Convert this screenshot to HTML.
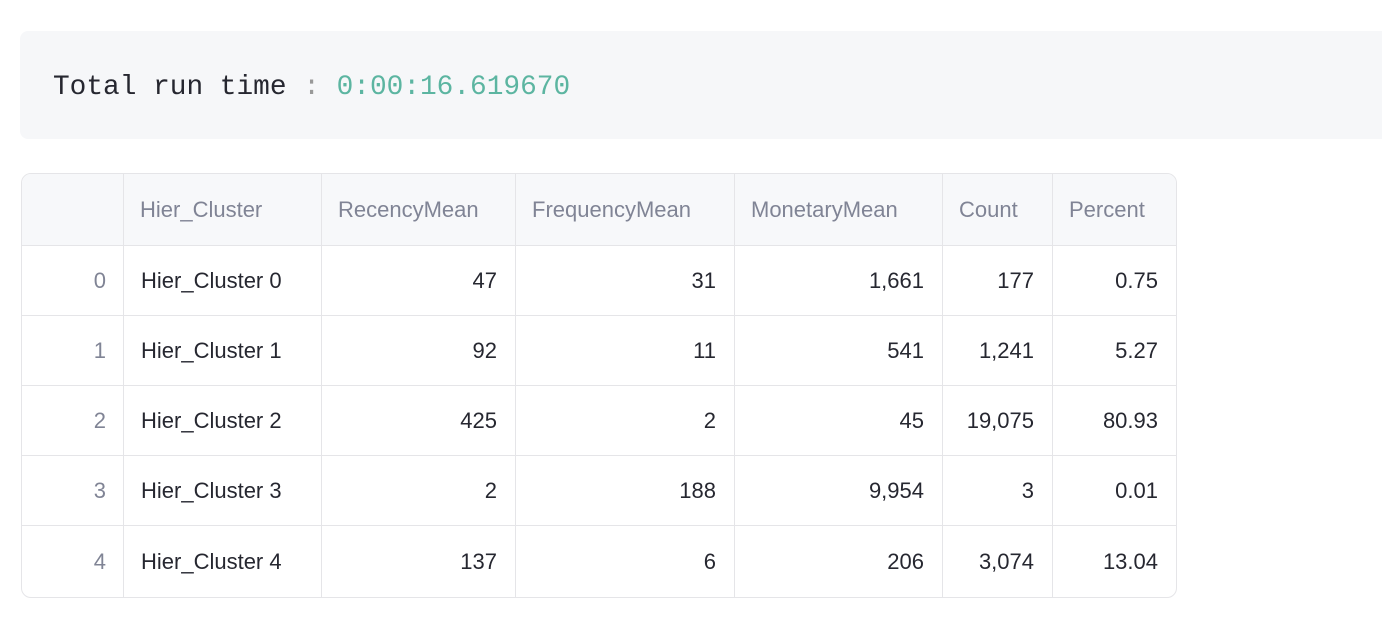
<!DOCTYPE html>
<html><head><style>
body{margin:0;background:#fff;width:1382px;height:622px;overflow:hidden;position:relative;font-family:"Liberation Sans",sans-serif}
.code{position:absolute;left:20px;top:31px;width:1380px;height:108px;background:#f6f7f9;border-radius:8px}
.code span.t{position:absolute;left:33px;top:41px;font-family:"Liberation Mono",monospace;font-size:27.8px;color:#262730;white-space:pre;line-height:32px}
.g{color:#999}.n{color:#5cb5a1}
table{position:absolute;left:21px;top:173px;border-collapse:separate;border-spacing:0;border:1px solid #e5e5e8;border-radius:10px;overflow:hidden;font-size:22px;color:#262730}
td,th{border-right:1px solid #e5e5e8;border-bottom:1px solid #e5e5e8;height:70px;padding:0 18px;box-sizing:border-box;text-align:right;font-weight:normal}
th{background:#f7f8fa;color:#808495;text-align:left;height:72px;padding:0 16px}
tr:last-child td{border-bottom:none;height:71px}
td:last-child,th:last-child{border-right:none}
td.i{color:#808495;padding-right:17px}
td.l{text-align:left;padding-left:17px}
</style></head><body>
<div class="code"><span class="t">Total run time <span class="g">:</span> <span class="n">0:00:16.619670</span></span></div>
<table>
<tr><th style="width:102px"></th><th style="width:198px">Hier_Cluster</th><th style="width:194px">RecencyMean</th><th style="width:219px">FrequencyMean</th><th style="width:208px">MonetaryMean</th><th style="width:110px">Count</th><th style="width:123px">Percent</th></tr>
<tr><td class="i">0</td><td class="l">Hier_Cluster 0</td><td>47</td><td>31</td><td>1,661</td><td>177</td><td>0.75</td></tr>
<tr><td class="i">1</td><td class="l">Hier_Cluster 1</td><td>92</td><td>11</td><td>541</td><td>1,241</td><td>5.27</td></tr>
<tr><td class="i">2</td><td class="l">Hier_Cluster 2</td><td>425</td><td>2</td><td>45</td><td>19,075</td><td>80.93</td></tr>
<tr><td class="i">3</td><td class="l">Hier_Cluster 3</td><td>2</td><td>188</td><td>9,954</td><td>3</td><td>0.01</td></tr>
<tr><td class="i">4</td><td class="l">Hier_Cluster 4</td><td>137</td><td>6</td><td>206</td><td>3,074</td><td>13.04</td></tr>
</table>
</body></html>
